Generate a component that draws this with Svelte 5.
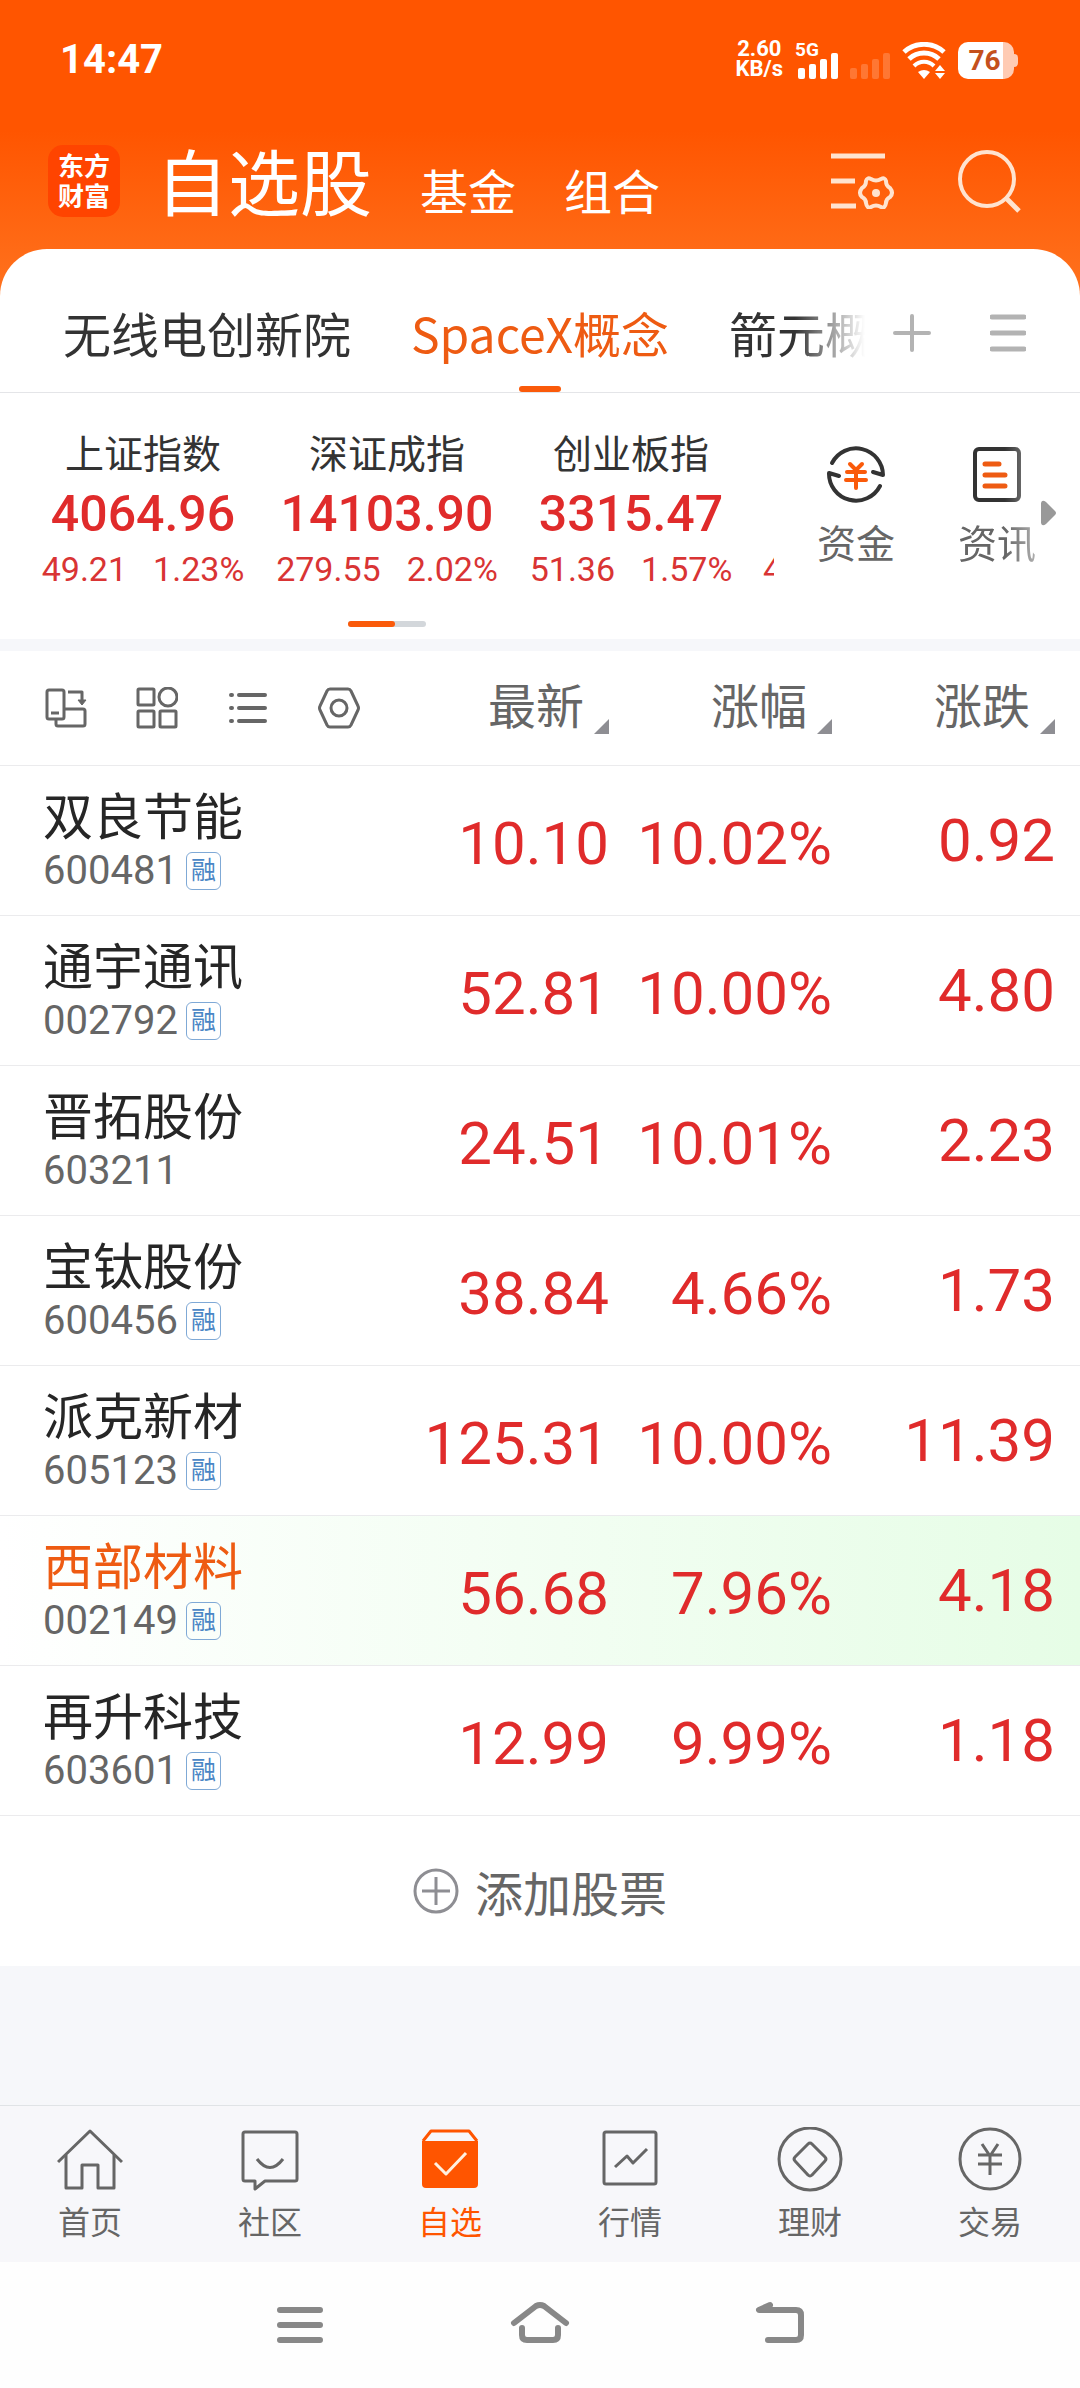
<script lang="ts">
  type Stock = {
    name: string;
    code: string;
    margin: boolean;
    price: string;
    pct: string;
    change: string;
  };

  const groups = ['无线电创新院', 'SpaceX概念', '箭元概念'];

  const indices = [
    { name: '上证指数', value: '4064.96', change: '49.21', pct: '1.23%' },
    { name: '深证成指', value: '14103.90', change: '279.55', pct: '2.02%' },
    { name: '创业板指', value: '3315.47', change: '51.36', pct: '1.57%' }
  ];

  const stocks: Stock[] = [
    { name: '双良节能', code: '600481', margin: true, price: '10.10', pct: '10.02%', change: '0.92' },
    { name: '通宇通讯', code: '002792', margin: true, price: '52.81', pct: '10.00%', change: '4.80' },
    { name: '晋拓股份', code: '603211', margin: false, price: '24.51', pct: '10.01%', change: '2.23' },
    { name: '宝钛股份', code: '600456', margin: true, price: '38.84', pct: '4.66%', change: '1.73' },
    { name: '派克新材', code: '605123', margin: true, price: '125.31', pct: '10.00%', change: '11.39' },
    { name: '西部材料', code: '002149', margin: true, price: '56.68', pct: '7.96%', change: '4.18' },
    { name: '再升科技', code: '603601', margin: true, price: '12.99', pct: '9.99%', change: '1.18' }
  ];

  const columns = ['最新', '涨幅', '涨跌'];
  const navItems = ['首页', '社区', '自选', '行情', '理财', '交易'];

  let activeGroup = $state('SpaceX概念');
  let activeNav = $state('自选');
  let flashing = $state('002149');
</script>

<div class="page">
  <header class="top">
    <div class="status">
      <span class="time">14:47</span>
      <div class="status-right">
        <div class="speed"><span>2.60</span><span>KB/s</span></div>
        <div class="signal">
          <span class="net">5G</span>
          <svg width="41" height="26" viewBox="0 0 41 26" fill="#fff">
            <rect x="0" y="15" width="7" height="11" rx="2" />
            <rect x="11" y="11" width="7" height="15" rx="2" />
            <rect x="22" y="6" width="7" height="20" rx="2" />
            <rect x="33" y="0" width="7" height="26" rx="2" />
          </svg>
        </div>
        <svg class="signal-off" width="41" height="26" viewBox="0 0 41 26" fill="#fff" fill-opacity="0.2">
          <rect x="0" y="15" width="7" height="11" rx="2" />
          <rect x="11" y="11" width="7" height="15" rx="2" />
          <rect x="22" y="6" width="7" height="20" rx="2" />
          <rect x="33" y="0" width="7" height="26" rx="2" />
        </svg>
        <svg width="45" height="37" viewBox="0 0 45 37" fill="none" stroke="#fff" stroke-width="5">
          <path d="M2 10 A30 30 0 0 1 42 10" />
          <path d="M7 17 A22 22 0 0 1 37 17" />
          <path d="M12 24 A14 14 0 0 1 32 24" stroke-width="4" />
          <path d="M16 30 Q22 26 28 30 L22 37Z" fill="#fff" stroke="none" />
          <path d="M38 23 L43 29 H33Z M38 37 L43 31 H33Z" fill="#fff" stroke="none" />
        </svg>
        <div class="battery"><span>76</span></div>
      </div>
    </div>

    <div class="title-bar">
      <div class="logo"><span>东方</span><span>财富</span></div>
      <h1>自选股</h1>
      <a href="#fund">基金</a>
      <a href="#combo">组合</a>
      <div class="actions">
        <button type="button" aria-label="设置">
          <svg width="64" height="56" viewBox="0 0 64 56" fill="none" stroke="#ffe3cf" stroke-width="5">
            <path d="M0 3 H54 M0 28 H24 M0 53 H25" />
            <path
              d="M40 26 Q45 29 50 26 Q54 24 55 28 Q55 33 59 35 Q63 40 59 44 Q55 46 55 50 Q54 56 50 54 Q45 51 40 54 Q36 56 35 50 Q35 46 31 44 Q27 40 31 35 Q35 33 35 28 Q36 24 40 26Z"
              stroke-width="4"
            />
            <circle cx="45" cy="40" r="4" fill="#ffe3cf" stroke="none" />
          </svg>
        </button>
        <button type="button" aria-label="搜索">
          <svg width="64" height="64" viewBox="0 0 64 64" fill="none" stroke="#ffe3cf" stroke-width="4">
            <circle cx="29" cy="30" r="27" />
            <path d="M48 49 L61 62" stroke-width="5" />
          </svg>
        </button>
      </div>
    </div>
  </header>

  <main>
    <div class="groups">
      <div class="group-list">
        {#each groups as group}
          <button
            type="button"
            class="group"
            class:active={group === activeGroup}
            onclick={() => (activeGroup = group)}
          >
            {group}
          </button>
        {/each}
      </div>
      <div class="group-actions">
        <button type="button" aria-label="添加分组">
          <svg width="40" height="40" viewBox="0 0 40 40" fill="none" stroke="#b3b3b3" stroke-width="4" stroke-linecap="round">
            <path d="M3 20 H37 M20 3 V37" />
          </svg>
        </button>
        <button type="button" aria-label="管理分组">
          <svg width="36" height="40" viewBox="0 0 36 40" fill="none" stroke="#b3b3b3" stroke-width="5" stroke-linecap="round">
            <path d="M2 4 H34 M2 20 H34 M2 36 H34" />
          </svg>
        </button>
      </div>
    </div>

    <section class="market">
      <div class="market-left">
        <div class="index-list">
          {#each indices as item}
            <div class="index">
              <span class="index-name">{item.name}</span>
              <span class="index-value">{item.value}</span>
              <span class="index-change"><span>{item.change}</span><span>{item.pct}</span></span>
            </div>
          {/each}
          <div class="index peek"><span class="index-change">4</span></div>
        </div>
        <div class="pager"><i></i></div>
      </div>
      <div class="shortcuts">
        <a href="#money">
          <svg width="60" height="60" viewBox="0 0 60 60" fill="none" stroke="#333" stroke-width="4" stroke-linecap="round" stroke-linejoin="round">
            <path d="M6 19 A27 27 0 0 1 57 31 L47 28" />
            <path d="M54 42 A27 27 0 0 1 3 29 L13 32" />
            <path d="M24 20 L30 26 L36 20 M21 28 H39 M20 36 H40 M30 27 V44" stroke="#fa5a0a" />
          </svg>
          资金
        </a>
        <a href="#news" class="fade">
          <svg width="60" height="60" viewBox="0 0 60 60" fill="none" stroke="#333" stroke-width="4" stroke-linecap="round">
            <rect x="8" y="5" width="44" height="51" rx="4" />
            <path d="M18 20 H32 M18 31 H38 M18 42 H38" stroke="#ee5b12" stroke-width="5" />
          </svg>
          资讯
        </a>
        <svg class="more" width="16" height="26" viewBox="0 0 16 26" fill="#999">
          <path d="M0 3 Q1 -1 5 2 L14 11 Q16 13 14 15 L5 24 Q1 27 0 23Z" />
        </svg>
      </div>
    </section>

    <table>
      <colgroup>
        <col />
        <col class="col-num" />
        <col class="col-num" />
        <col class="col-last" />
      </colgroup>
      <thead>
        <tr>
          <th>
            <div class="tools">
              <button type="button" aria-label="横竖屏">
                <svg width="42" height="42" viewBox="0 0 42 42" fill="none" stroke="#666" stroke-width="3" stroke-linejoin="round">
                  <rect x="2" y="3" width="17" height="29" rx="2" />
                  <path d="M6 26 H14" />
                  <path d="M19 22 H38 Q40 22 40 24 V37 Q40 39 38 39 H13 Q11 39 11 37 V32" />
                  <path d="M23 5 H37 V14" />
                  <path d="M33 13 H41 L37 18Z" fill="#666" stroke-width="1" />
                </svg>
              </button>
              <button type="button" aria-label="宫格">
                <svg width="42" height="42" viewBox="0 0 42 42" fill="none" stroke="#666" stroke-width="3">
                  <rect x="2" y="2" width="16" height="16" rx="1" />
                  <circle cx="32" cy="10" r="9" />
                  <rect x="2" y="24" width="16" height="16" rx="1" />
                  <rect x="24" y="24" width="16" height="16" rx="1" />
                </svg>
              </button>
              <button type="button" aria-label="列表">
                <svg width="42" height="42" viewBox="0 0 42 42" fill="none" stroke="#666" stroke-width="4" stroke-linecap="round">
                  <path d="M12 8 H38 M12 21 H38 M12 34 H38" />
                  <path d="M4 8 H5 M4 21 H5 M4 34 H5" />
                </svg>
              </button>
              <button type="button" aria-label="设置">
                <svg width="42" height="42" viewBox="0 0 42 42" fill="none" stroke="#666" stroke-width="3" stroke-linejoin="round">
                  <path d="M12 2 H30 Q32 2 33 4 L40 19 Q41 21 40 23 L33 38 Q32 40 30 40 H12 Q10 40 9 38 L2 23 Q1 21 2 19 L9 4 Q10 2 12 2Z" />
                  <circle cx="21" cy="21" r="8" />
                </svg>
              </button>
            </div>
          </th>
          {#each columns as column}
            <th><button type="button" class="sort">{column}<i></i></button></th>
          {/each}
        </tr>
      </thead>
      <tbody>
        {#each stocks as stock (stock.code)}
          <tr class:flash={stock.code === flashing}>
            <td>
              <span class="stock-name">{stock.name}</span>
              <span class="stock-code">
                {stock.code}
                {#if stock.margin}<em>融</em>{/if}
              </span>
            </td>
            <td class="num">{stock.price}</td>
            <td class="num">{stock.pct}</td>
            <td class="num">{stock.change}</td>
          </tr>
        {/each}
      </tbody>
    </table>

    <button type="button" class="add">
      <svg width="46" height="46" viewBox="0 0 46 46" fill="none" stroke="#8e8e93" stroke-width="3">
        <circle cx="23" cy="23" r="21" />
        <path d="M9 23 H37 M23 9 V37" />
      </svg>
      添加股票
    </button>
  </main>

  <nav class="tabbar">
    {#each navItems as item}
      <button type="button" class:active={item === activeNav} onclick={() => (activeNav = item)}>
        <svg width="66" height="66" viewBox="0 0 66 66" fill="none" stroke="currentColor" stroke-width="3" stroke-linejoin="round">
          {#if item === '首页'}
            <path d="M1 35 L33 4 L65 35" />
            <path d="M9 28 V61 H25 V38 H41 V61 H57 V28" />
          {:else if item === '社区'}
            <path d="M8 5 H58 Q60 5 60 7 V52 Q60 54 58 54 H28 L18 62 V54 H8 Q6 54 6 52 V7 Q6 5 8 5Z" />
            <path d="M20 32 Q33 49 46 32" />
          {:else if item === '自选'}
            <path d="M6 14 L14 4 H52 L60 14" />
            <path d="M5 14 H61 V57 Q61 61 57 61 H9 Q5 61 5 57Z" fill="currentColor" stroke="none" />
            <path d="M18 36 L29 47 L49 26" stroke="#fff0e0" />
          {:else if item === '行情'}
            <rect x="7" y="5" width="52" height="52" rx="2" />
            <path d="M18 40 L30 29 L36 36 L50 22" />
          {:else if item === '理财'}
            <circle cx="33" cy="32" r="31" />
            <path d="M31 17 Q33 15 35 17 L48 30 Q50 32 48 34 L35 48 Q33 50 31 48 L18 34 Q16 32 18 30Z" />
          {:else}
            <circle cx="33" cy="32" r="30" />
            <path d="M25 17 L33 29 L41 17 M21 28 H45 M21 37 H45 M33 28 V48" />
          {/if}
        </svg>
        {item}
      </button>
    {/each}
  </nav>

  <div class="system">
    <button type="button" aria-label="最近任务">
      <svg width="60" height="48" viewBox="0 0 60 48"><path d="M10 9 H50 M10 24 H50 M10 39 H50" /></svg>
    </button>
    <button type="button" aria-label="主屏幕">
      <svg width="60" height="48" viewBox="0 0 60 48">
        <path d="M4 22 L26 5 Q30 3 34 5 L56 22" />
        <path d="M12 27 V34 Q12 39 17 39 H43 Q48 39 48 34 V27" />
      </svg>
    </button>
    <button type="button" aria-label="返回">
      <svg width="60" height="48" viewBox="0 0 60 48"><path d="M20 4 L9 9 H46 Q51 9 51 14 V34 Q51 39 46 39 H18" /></svg>
    </button>
  </div>
</div>

<style>
  :global(body) {
    margin: 0;
    background: #f6f7fa;
  }

  .page {
    min-height: 100vh;
    display: flex;
    flex-direction: column;
    font-family: Roboto, 'Noto Sans CJK SC', sans-serif;
    color: #333;
    background: linear-gradient(#ff5500 130px, #ff731f 300px, #f6f7fa 300px);
  }

  button {
    margin: 0;
    padding: 0;
    border: none;
    background: none;
    font: inherit;
    color: inherit;
    cursor: pointer;
  }

  a {
    color: inherit;
    text-decoration: none;
  }

  svg {
    display: block;
    flex-shrink: 0;
  }

  .top {
    height: 249px;
    color: #fff;
  }

  .status {
    display: flex;
    align-items: center;
    justify-content: space-between;
    height: 118px;
    padding: 0 60px;
    font-weight: 700;
  }

  .time {
    font-size: 40px;
  }

  .status-right {
    display: flex;
    align-items: flex-end;
    gap: 11px;
  }

  .speed {
    display: flex;
    flex-direction: column;
    align-items: center;
    margin-right: 4px;
    font-size: 22px;
    line-height: 20px;
  }

  .signal {
    position: relative;
  }

  .net {
    position: absolute;
    left: -3px;
    top: -12px;
    font-size: 19px;
    line-height: 18px;
  }

  .battery {
    position: relative;
    box-sizing: border-box;
    width: 56px;
    height: 37px;
    padding-right: 3px;
    margin-right: 6px;
    border-radius: 10px;
    background: linear-gradient(90deg, #fff 45px, #ffcbb3 45px);
    color: #c4501c;
    font-size: 28px;
    line-height: 37px;
    text-align: center;
  }

  .battery::after {
    content: '';
    position: absolute;
    left: 56px;
    top: 12px;
    width: 4px;
    height: 13px;
    border-radius: 0 4px 4px 0;
    background: #ffcbb3;
  }

  .title-bar {
    display: flex;
    align-items: baseline;
    gap: 48px;
    height: 126px;
    padding: 0 58px 0 48px;
    font-size: 48px;
    line-height: 136px;
  }

  h1 {
    margin: 0 0 0 -12px;
    font-size: 72px;
    font-weight: 400;
  }

  .logo {
    display: flex;
    flex-direction: column;
    align-items: center;
    justify-content: center;
    align-self: center;
    box-sizing: border-box;
    width: 72px;
    height: 72px;
    padding-top: 2px;
    border-radius: 15px;
    background: #ff4400;
    font-size: 26px;
    font-weight: 700;
    line-height: 30px;
  }

  .actions {
    display: flex;
    align-items: center;
    align-self: center;
    gap: 63px;
    margin-left: auto;
  }

  main {
    overflow: hidden;
    border-radius: 47px 47px 0 0;
    background: #fff;
  }

  .groups {
    display: flex;
    justify-content: space-between;
    height: 143px;
    padding: 0 54px 0 63px;
    border-bottom: 1px solid #e4e5e8;
  }

  .group-list {
    display: flex;
    flex: 1;
    gap: 60px;
    overflow: hidden;
    mask-image: linear-gradient(90deg, #000 calc(100% - 70px), transparent);
  }

  .group {
    position: relative;
    flex-shrink: 0;
    padding-top: 22px;
    font-family: 'Noto Sans CJK SC', sans-serif;
    font-size: 48px;
    white-space: nowrap;
  }

  .group.active {
    color: #ee5b12;
  }

  .group.active::after {
    content: '';
    position: absolute;
    left: calc(50% - 21px);
    bottom: 0;
    width: 42px;
    height: 6px;
    border-radius: 3px;
    background: #fa5a0a;
  }

  .group-actions {
    display: flex;
    align-items: center;
    gap: 58px;
    padding: 24px 0 0 27px;
  }

  .market {
    display: flex;
    border-bottom: 12px solid #f6f7fa;
  }

  .market-left {
    flex: 1;
    min-width: 0;
    padding: 39px 0 12px;
  }

  .index-list {
    display: flex;
    align-items: flex-end;
    padding-left: 21px;
    overflow: hidden;
  }

  .index {
    display: flex;
    flex: 0 0 244px;
    flex-direction: column;
    align-items: center;
    white-space: nowrap;
  }

  .index.peek {
    box-sizing: border-box;
    align-items: flex-start;
    padding-left: 10px;
  }

  .index-name {
    font-size: 39px;
    line-height: 46px;
  }

  .index-value {
    margin-top: 6px;
    color: #e02b2b;
    font-size: 50px;
    font-weight: 500;
    line-height: 60px;
  }

  .index-change {
    display: flex;
    gap: 26px;
    margin-top: 2px;
    color: #d93434;
    font-size: 34px;
    line-height: 46px;
  }

  .pager {
    width: 78px;
    height: 6px;
    margin: 29px auto 0;
    border-radius: 3px;
    background: #d3d7db;
  }

  .pager i {
    display: block;
    width: 47px;
    height: 6px;
    border-radius: 3px;
    background: #fa5a0a;
  }

  .shortcuts {
    display: flex;
    align-items: flex-start;
    width: 306px;
    padding-top: 51px;
  }

  .shortcuts a {
    display: flex;
    flex-direction: column;
    align-items: center;
    gap: 16px;
    width: 80px;
    margin-left: 42px;
    color: #666;
    font-size: 39px;
    line-height: 50px;
  }

  .shortcuts a + a {
    margin-left: 61px;
  }

  .shortcuts .fade {
    mask-image: linear-gradient(90deg, #000 60%, rgba(0, 0, 0, 0.5));
  }

  .more {
    margin: 56px 0 0 4px;
  }

  table {
    width: 100%;
    table-layout: fixed;
    border-spacing: 0;
  }

  .col-num {
    width: 223px;
  }

  .col-last {
    width: 248px;
  }

  th,
  td {
    box-sizing: border-box;
    height: 150px;
    padding: 0;
    border-bottom: 1px solid #ebebed;
    text-align: right;
    font-weight: 400;
  }

  th {
    height: 115px;
    color: #666;
  }

  th:last-child,
  td:last-child {
    padding-right: 25px;
  }

  td:first-child {
    padding-left: 43px;
    text-align: left;
  }

  .tools {
    display: flex;
    gap: 49px;
    padding-left: 45px;
  }

  .sort {
    display: inline-flex;
    align-items: flex-end;
    gap: 10px;
    font-size: 48px;
    line-height: 60px;
  }

  .sort i {
    width: 15px;
    height: 15px;
    margin-bottom: 4px;
    background: #8e8e93;
    clip-path: polygon(100% 0, 100% 100%, 0 100%);
  }

  .stock-name {
    display: block;
    color: #262626;
    font-size: 50px;
    line-height: 60px;
  }

  .stock-code {
    display: flex;
    align-items: center;
    gap: 8px;
    color: #666;
    font-size: 40px;
    line-height: 46px;
  }

  .stock-code em {
    box-sizing: border-box;
    width: 35px;
    height: 38px;
    border: 1px solid #7fa9d6;
    border-radius: 6px;
    color: #4a86c5;
    font-size: 25px;
    font-style: normal;
    line-height: 36px;
    text-align: center;
  }

  .num {
    padding-top: 6px;
    color: #e02b2b;
    font-size: 60px;
  }

  .num:last-child {
    padding-top: 0;
  }

  .flash {
    background: linear-gradient(90deg, #fff, #e6fde6);
  }

  .flash .stock-name {
    color: #ee5b12;
  }

  .add {
    display: flex;
    align-items: center;
    justify-content: center;
    gap: 16px;
    width: 100%;
    height: 150px;
    color: #666;
    font-size: 48px;
  }

  .tabbar {
    display: flex;
    margin-top: auto;
    border-top: 1px solid #e0e3e6;
    background: #f7f7fa;
  }

  .tabbar button {
    display: flex;
    flex: 1;
    flex-direction: column;
    align-items: center;
    height: 156px;
    padding-top: 21px;
    color: #666;
    font-size: 32px;
    line-height: 60px;
  }

  .tabbar button.active {
    color: #ff5500;
  }

  .system {
    display: flex;
    align-items: center;
    justify-content: center;
    gap: 180px;
    height: 126px;
    background: #fefefe;
  }

  .system svg {
    fill: none;
    stroke: #888;
    stroke-width: 6;
    stroke-linecap: round;
    stroke-linejoin: round;
  }
</style>
